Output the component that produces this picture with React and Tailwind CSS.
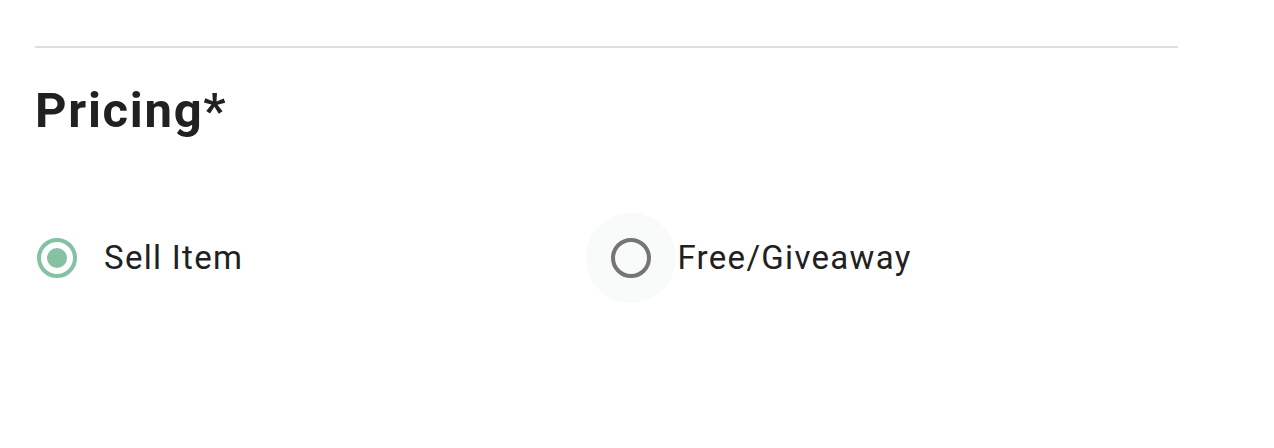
import React, { useState } from 'react';

const RadioIcon = ({ checked }) => (
  <svg viewBox="0 0 24 24" className="w-[48px] h-[48px]">
    <circle
      cx="12"
      cy="12"
      r="9"
      fill="none"
      stroke={checked ? '#84c2a2' : '#757575'}
      strokeWidth="2"
    />
    {checked && <circle cx="12" cy="12" r="5" fill="#84c2a2" />}
  </svg>
);

const RadioOption = ({ label, checked, hovered, onSelect, className }) => (
  <label className={'flex items-center cursor-pointer ' + className} onClick={onSelect}>
    <span
      className={
        'w-[90px] h-[90px] rounded-full flex items-center justify-center ' +
        (hovered ? 'bg-[#f9fafa]' : '')
      }
    >
      <RadioIcon checked={checked} />
    </span>
    <span className="ml-[2px] text-[33px] text-[#212121] tracking-[1.3px]">{label}</span>
  </label>
);

const App = () => {
  const [pricing, setPricing] = useState('sell');

  return (
    <div
      className="w-full h-[448px] bg-white px-[35px] overflow-hidden"
      style={{ fontFamily: 'Roboto, "Liberation Sans", sans-serif' }}
    >
      <div className="w-[1143px]">
        <div className="mt-[46px] h-[2px] bg-[#e0e0e0]" />
        <h2 className="mt-[35px] text-[49px] leading-[56px] font-bold text-[#212121] tracking-[1.7px]">
          Pricing*
        </h2>
        <div className="mt-[74px] grid grid-cols-2">
          <RadioOption
            label="Sell Item"
            checked={pricing === 'sell'}
            onSelect={() => setPricing('sell')}
            className="ml-[-23px]"
          />
          <RadioOption
            label="Free/Giveaway"
            checked={pricing === 'free'}
            hovered
            onSelect={() => setPricing('free')}
            className="ml-[-21px]"
          />
        </div>
      </div>
    </div>
  );
};

export default App;
